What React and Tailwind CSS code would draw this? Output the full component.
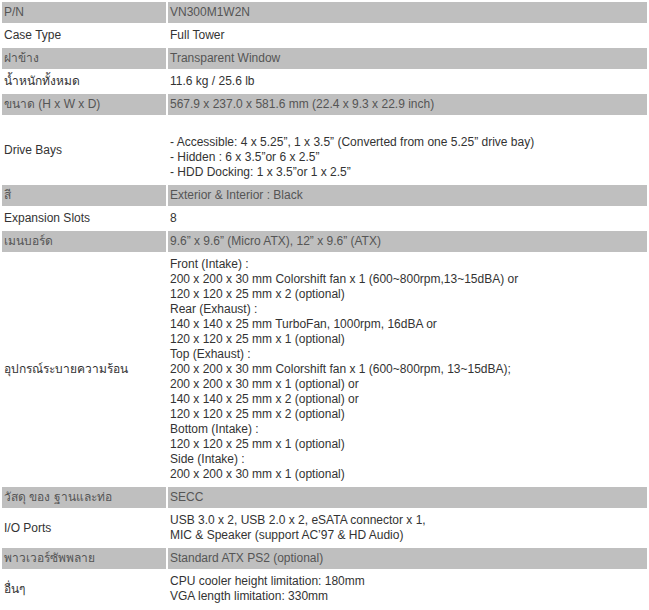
const specs = [
  { label: "P/N", value: ["VN300M1W2N"], shade: true },
  { label: "Case Type", value: ["Full Tower"] },
  { label: "ฝาข้าง", value: ["Transparent Window"], shade: true },
  { label: "น้ำหนักทั้งหมด", value: ["11.6 kg / 25.6 lb"] },
  { label: "ขนาด (H x W x D)", value: ["567.9 x 237.0 x 581.6 mm (22.4 x 9.3 x 22.9 inch)"], shade: true },
  {
    label: "Drive Bays",
    value: [
      "\u00a0",
      "- Accessible: 4 x 5.25”, 1 x 3.5” (Converted from one 5.25” drive bay)",
      "- Hidden : 6 x 3.5”or 6 x 2.5”",
      "- HDD Docking: 1 x 3.5”or 1 x 2.5”",
    ],
  },
  { label: "สี", value: ["Exterior & Interior : Black"], shade: true },
  { label: "Expansion Slots", value: ["8"] },
  { label: "เมนบอร์ด", value: ["9.6” x 9.6” (Micro ATX), 12” x 9.6” (ATX)"], shade: true },
  {
    label: "อุปกรณ์ระบายความร้อน",
    value: [
      "Front (Intake) :",
      "200 x 200 x 30 mm Colorshift fan x 1 (600~800rpm,13~15dBA) or",
      "120 x 120 x 25 mm x 2 (optional)",
      "Rear (Exhaust) :",
      "140 x 140 x 25 mm TurboFan, 1000rpm, 16dBA or",
      "120 x 120 x 25 mm x 1 (optional)",
      "Top (Exhaust) :",
      "200 x 200 x 30 mm Colorshift fan x 1 (600~800rpm, 13~15dBA);",
      "200 x 200 x 30 mm x 1 (optional) or",
      "140 x 140 x 25 mm x 2 (optional) or",
      "120 x 120 x 25 mm x 2 (optional)",
      "Bottom (Intake) :",
      "120 x 120 x 25 mm x 1 (optional)",
      "Side (Intake) :",
      "200 x 200 x 30 mm x 1 (optional)",
    ],
  },
  { label: "วัสดุ ของ ฐานและท่อ", value: ["SECC"], shade: true },
  {
    label: "I/O Ports",
    value: ["USB 3.0 x 2, USB 2.0 x 2, eSATA connector x 1,", "MIC & Speaker (support AC’97 & HD Audio)"],
  },
  { label: "พาวเวอร์ซัพพลาย", value: ["Standard ATX PS2 (optional)"], shade: true },
  { label: "อื่นๆ", value: ["CPU cooler height limitation: 180mm", "VGA length limitation: 330mm"] },
];

export default function App() {
  return (
    <div className="w-[649px] bg-white font-['Liberation_Sans','Noto_Sans',sans-serif] text-[12px] leading-[15px] text-[#333]">
      <table className="w-full border-separate border-spacing-[2px]">
        <tbody>
          {specs.map((row) => (
            <tr key={row.label} className={row.shade ? "bg-[#bfbfbf] text-[#555]" : "bg-white"}>
              <td className="w-[164px] pl-[2px] py-[3px] align-middle">{row.label}</td>
              <td className="pl-[2px] py-[3px] align-middle">
                {row.value.map((line, i) => (
                  <div key={i}>{line}</div>
                ))}
              </td>
            </tr>
          ))}
        </tbody>
      </table>
    </div>
  );
}
